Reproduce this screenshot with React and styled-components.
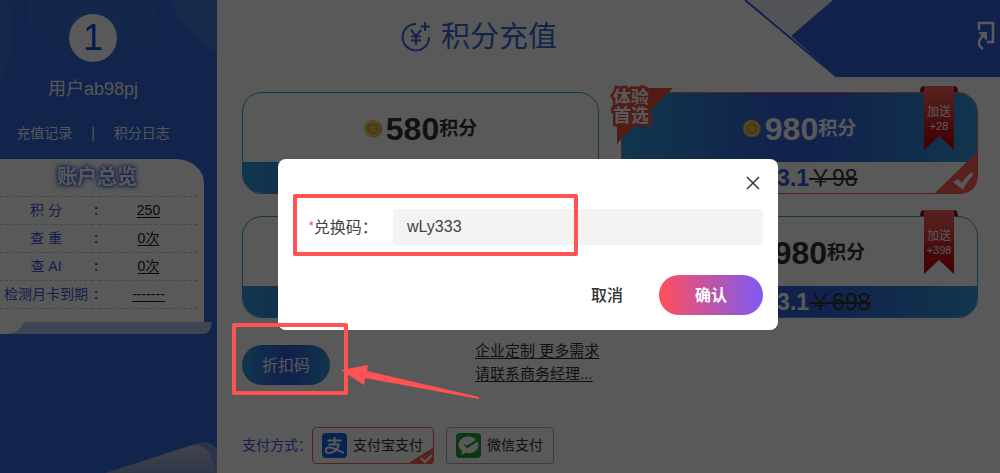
import React from "react";
import styled, { createGlobalStyle, css } from "styled-components";

const Global = createGlobalStyle`
  *, *::before, *::after { box-sizing: border-box; }
  body {
    margin: 0;
    background: #fff;
    font-family: "Liberation Sans", "Noto Sans CJK SC", sans-serif;
    font-size: 14px;
    color: #333;
  }
  button, input { font: inherit; }
`;

const blueGradient = "linear-gradient(90deg, #3399dd 0%, #3360da 46%, #3360da 54%, #3399dd 100%)";
const red = "#ff5e56";

const Page = styled.div`
  display: flex;
  min-height: 100vh;
`;

/* ---------- sidebar ---------- */

const Sidebar = styled.aside`
  position: relative;
  flex: 0 0 217px;
  display: flex;
  flex-direction: column;
  align-items: center;
  padding-top: 14px;
  background: #3367d6;
  overflow: hidden;
  > * { position: relative; }
`;

const SidebarArt = styled.svg`
  && { position: absolute; }
  left: 0;
  ${(p) => (p.$bottom ? "bottom: 0;" : "top: 0;")}
`;

const Avatar = styled.div`
  width: 48px;
  height: 48px;
  border-radius: 50%;
  background: #fff;
  color: #1048e8;
  font-size: 36px;
  line-height: 48px;
  text-align: center;
`;

const UserName = styled.div`
  margin-top: 14px;
  color: #f0f3fa;
  font-size: 18px;
  line-height: 26px;
`;

const QuickLinks = styled.nav`
  display: flex;
  justify-content: center;
  align-self: flex-start;
  gap: 19px;
  width: 186px;
  margin-top: 21px;
  color: #f0f3fa;
  line-height: 20px;
  a { color: inherit; text-decoration: none; }
`;

const Identity = styled.div`
  display: flex;
  flex-direction: column;
  align-items: center;
  align-self: flex-start;
  width: 186px;
`;

const Overview = styled.section`
  align-self: flex-start;
  width: 204px;
  height: 163px;
  margin-top: 16px;
  padding-right: 7px;
  background: #fff;
  border-top-right-radius: 28px 24px;
`;

const OverviewTitle = styled.h2`
  margin: 0;
  height: 37px;
  padding-right: 3px;
  color: #fff;
  font-size: 20px;
  line-height: 37px;
  text-align: center;
  text-shadow: 0 0 3px #3360da, 0 0 4px #3360da, 0 0 6px #3360da;
`;

const StatTable = styled.table`
  width: 100%;
  border-collapse: collapse;
  table-layout: fixed;
  tr { height: 28px; border-top: 1px dashed #ccc; }
  tbody tr:last-child { border-bottom: 1px dashed #ccc; }
  th, td { padding: 0 0 2px; font-weight: 400; text-align: center; line-height: 20px; white-space: nowrap; }
  th { color: #3d58dc; }
  td:nth-child(2) { color: #3d58dc; font-weight: 700; }
  a { color: #222; text-underline-offset: 2px; }
`;

const Curl = styled.svg`
  display: block;
  align-self: flex-start;
`;

/* ---------- main column ---------- */

const Main = styled.main`
  flex: 1;
  min-width: 0;
  display: flex;
  flex-direction: column;
`;

const TopBar = styled.header`
  position: relative;
  display: flex;
  align-items: center;
  gap: 10px;
  height: 77px;
  padding: 0 0 3px 184px;
  color: #3367d6;
`;

const Title = styled.h1`
  margin: 0;
  font-size: 29px;
  font-weight: 400;
  line-height: 40px;
`;

const Corner = styled.svg`
  position: absolute;
  top: 0;
  right: 0;
`;

const Plans = styled.div`
  display: grid;
  grid-template-columns: 1fr 1fr;
  gap: 22px;
  padding: 15px 22px 0 25px;
`;

const PlanCard = styled.article`
  position: relative;
  display: flex;
  flex-direction: column;
  height: 102px;
  border: 1px solid ${(p) => (p.$selected ? red : "#3399dd")};
  border-radius: 20px;
`;

const band = css`
  background: ${blueGradient};
  color: #fff;
`;

const Points = styled.div`
  flex: 1;
  display: flex;
  align-items: center;
  justify-content: center;
  padding-top: 2px;
  border-radius: 19px 19px 0 0;
  color: #333;
  ${(p) => p.$filled && band}
  svg { margin-right: 4px; }
`;

const Amount = styled.strong`
  font-size: 32px;
  line-height: 36px;
`;

const Unit = styled.strong`
  font-size: 19px;
  line-height: 28px;
`;

const Price = styled.div`
  display: flex;
  align-items: center;
  justify-content: center;
  height: 31px;
  border-radius: 0 0 19px 19px;
  color: #3360da;
  font-size: 23px;
  line-height: 30px;
  ${(p) => p.$filled && band}
  s { color: #333; }
`;

const Ribbon = styled.div`
  position: absolute;
  top: -7px;
  right: 19px;
  width: 38px;
  height: 65px;
  padding-top: 19px;
  color: #fff;
  font-size: 12px;
  line-height: 14px;
  text-align: center;
  svg { position: absolute; inset: 0; }
  span { position: relative; display: block; }
  span + span { font-size: 11px; }
`;

const PickBadge = styled.div`
  position: absolute;
  top: -7px;
  left: -11px;
  padding: 3px 2px;
  color: #fff;
  font-size: 18px;
  font-weight: 700;
  line-height: 18px;
  -webkit-text-stroke: 5px #e8503f;
  paint-order: stroke fill;
  svg { position: absolute; left: 0; top: 0; }
  span { position: relative; display: block; }
`;

const CornerTick = styled.svg`
  position: absolute;
  right: -1px;
  bottom: -1px;
`;

const Offers = styled.div`
  display: flex;
  align-items: flex-start;
  padding: 21px 25px 0;
`;

const DiscountButton = styled.button`
  width: 88px;
  height: 40px;
  margin-top: 6px;
  padding: 0 0 3px;
  border: 0;
  border-radius: 20px;
  background: ${blueGradient};
  color: #fff;
  font-size: 16px;
`;

const ContactLink = styled.a`
  margin-left: 145px;
  color: #333;
  font-size: 15px;
  line-height: 23px;
  text-underline-offset: 2px;
  span { display: block; text-decoration: underline; }
`;

const Payment = styled.fieldset`
  display: flex;
  align-items: center;
  gap: 12px;
  margin: 42px 0 0;
  padding: 0 25px;
  border: 0;
`;

const PayLabel = styled.span`
  width: 58px;
  padding-bottom: 3px;
  color: #3d58dc;
  white-space: nowrap;
`;

const PayOption = styled.label`
  position: relative;
  display: flex;
  align-items: center;
  gap: 6px;
  height: 37px;
  padding: 0 10px 0 9px;
  border: 1px solid ${(p) => (p.$selected ? red : "#aaa")};
  border-radius: 4px;
  input { position: absolute; opacity: 0; margin: 0; }
  span { padding-bottom: 3px; }
`;

/* ---------- dialog ---------- */

const Overlay = styled.div`
  position: fixed;
  inset: 0;
  z-index: 10;
  display: flex;
  justify-content: center;
  align-items: center;
  padding: 16px 0 0 56px;
  background: rgba(0, 0, 0, 0.65);
`;

const Dialog = styled.form`
  display: flex;
  flex-direction: column;
  width: 500px;
  padding: 12px 15px 15px 31px;
  border-radius: 8px;
  background: #fff;
`;

const CloseButton = styled.button`
  display: grid;
  place-items: center;
  align-self: flex-end;
  width: 24px;
  height: 24px;
  margin-right: -2px;
  padding: 0;
  border: 0;
  background: none;
`;

const Field = styled.div`
  display: flex;
  align-items: center;
  margin-top: 14px;
  font-size: 16px;
  label { width: 84px; padding-bottom: 3px; color: #444; white-space: nowrap; }
  i { color: #f33; font-style: normal; font-size: 12px; vertical-align: 3px; }
  input {
    flex: 1;
    min-width: 0;
    height: 36px;
    padding: 0 14px;
    border: 0;
    border-radius: 4px;
    outline: 0;
    background: #f3f3f3;
    color: #444;
  }
`;

const Actions = styled.div`
  display: flex;
  justify-content: flex-end;
  margin-top: 30px;
`;

const ActionButton = styled.button`
  width: 104px;
  height: 40px;
  padding: 0 0 3px;
  border: 0;
  border-radius: 20px;
  background: ${(p) => (p.$primary ? "linear-gradient(90deg, #ff4f5b, #7d5af5)" : "none")};
  color: ${(p) => (p.$primary ? "#fff" : "#333")};
  font-size: 16px;
  font-weight: ${(p) => (p.$primary ? 700 : 500)};
`;

/* ---------- tutorial marks ---------- */

const Marks = styled.div`
  position: fixed;
  inset: 0;
  z-index: 20;
  pointer-events: none;
  svg { position: absolute; left: 340px; top: 364px; }
`;

const MarkBox = styled.div`
  position: absolute;
  left: ${(p) => p.$x}px;
  top: ${(p) => p.$y}px;
  width: ${(p) => p.$w}px;
  height: ${(p) => p.$h}px;
  border: 4px solid #ff5252;
  border-radius: 2px;
`;

function Coin() {
  return (
    <svg width="18" height="19" viewBox="0 0 18 19" aria-hidden="true">
      <ellipse cx="9.500" cy="10" rx="8.500" ry="8.500" fill="#b9983a" />
      <ellipse cx="8.500" cy="9.500" rx="8.500" ry="8.500" fill="#edcf58" />
      <circle cx="9" cy="9.500" r="5.800" fill="#d8a03e" />
      <path d="M9 5l1.500 2.600 3 .7-2 2.300.2 3L9 12.400l-2.800 1.200.3-3-2-2.300 3-.7z" fill="#edc450" />
    </svg>
  );
}

function GiftRibbon({ amount }) {
  return (
    <Ribbon>
      <svg width="38" height="65" viewBox="0 0 38 65" aria-hidden="true">
        <defs>
          <linearGradient id="ribbon" x1="0" y1="0" x2="0" y2="1">
            <stop offset="0" stopColor="#f8605a" />
            <stop offset="0.3" stopColor="#e64a44" />
            <stop offset="0.65" stopColor="#c81c1e" />
            <stop offset="1" stopColor="#c00408" />
          </linearGradient>
        </defs>
        <path d="M0 6Q0 0 4 0H34Q38 0 38 6Z" fill="#980f12" />
        <path d="M4 0H34V64L19 50L4 64Z" fill="url(#ribbon)" />
      </svg>
      <span>加送</span>
      <span>{amount}</span>
    </Ribbon>
  );
}

function Tick({ size = "large" }) {
  return size === "large" ? (
    <CornerTick width="44" height="43" viewBox="0 0 44 43" aria-hidden="true">
      <path d="M44 0V23Q44 43 24 43H0Z" fill={red} />
      <path d="M19 31l5-3 4 4q4-7 10-11l1 3q-6 6-10 15z" fill="#fff" />
    </CornerTick>
  ) : (
    <CornerTick width="27" height="17" viewBox="0 0 27 17" aria-hidden="true">
      <path d="M27 0V13Q27 17 23 17H0Z" fill={red} />
      <path d="M14 11l4 4 7-7" fill="none" stroke="#fff" strokeWidth="2" />
    </CornerTick>
  );
}

const plans = [
  { amount: "580", price: "￥43.1", old: "￥58" },
  { amount: "980", price: "￥63.1", old: "￥98", gift: "+28", selected: true },
  { amount: "2980", price: "￥263.1", old: "￥298" },
  { amount: "6980", price: "￥463.1", old: "￥698", gift: "+398" },
];

function Plan({ amount, price, old, gift, selected }) {
  return (
    <PlanCard $selected={selected}>
      <Points $filled={selected}>
        <Coin />
        <Amount>{amount}</Amount>
        <Unit>积分</Unit>
      </Points>
      <Price $filled={!selected}>
        <strong>{price}</strong>
        <s>{old}</s>
      </Price>
      {selected && (
        <PickBadge>
          <svg width="62" height="58" viewBox="0 0 62 58" aria-hidden="true">
            <path d="M4 2H62L56 8 11 52 6 58V40Z" fill="#e8503f" />
          </svg>
          <span>体验</span>
          <span>首选</span>
        </PickBadge>
      )}
      {gift && <GiftRibbon amount={gift} />}
      {selected && <Tick />}
    </PlanCard>
  );
}

const stats = [
  ["积 分", "250"],
  ["查 重", "0次"],
  ["查 AI", "0次"],
  ["检测月卡到期", "-------"],
];

export default function App() {
  return (
    <>
      <Global />
      <Page>
        <Sidebar>
          <SidebarArt width="217" height="90" viewBox="0 0 217 90" aria-hidden="true">
            <path d="M170 0Q184 36 217 52V0Z" fill="#fff" opacity="0.1" />
            <path d="M27 0C22 28 40 42 68 43C105 44 135 42 165 36L150 0Z" fill="#fff" opacity="0.05" />
            <path d="M0 0H5Q25 40 0 80Z" fill="#fff" opacity="0.06" />
          </SidebarArt>
          <SidebarArt $bottom width="217" height="32" viewBox="0 0 217 32" aria-hidden="true">
            <defs>
              <linearGradient id="sheet" x1="0" y1="0" x2="0" y2="1">
                <stop offset="0" stopColor="#b9c3dc" />
                <stop offset="1" stopColor="#8f9dcc" />
              </linearGradient>
            </defs>
            <path d="M105 32L194 3Q210 -2 217 8V32Z" fill="#7f96d2" />
            <path d="M107 32L194 4Q212 4 215 32Z" fill="url(#sheet)" />
          </SidebarArt>
          <Identity>
            <Avatar>1</Avatar>
            <UserName>用户ab98pj</UserName>
          </Identity>
          <QuickLinks>
            <a href="#records">充值记录</a>
            <span>|</span>
            <a href="#log">积分日志</a>
          </QuickLinks>
          <Overview>
            <OverviewTitle>账户总览</OverviewTitle>
            <StatTable>
              <colgroup>
                <col width="92" />
                <col width="8" />
                <col width="97" />
              </colgroup>
              <tbody>
                {stats.map(([name, value]) => (
                  <tr key={name}>
                    <th scope="row">{name}</th>
                    <td>:</td>
                    <td><a href="#detail">{value}</a></td>
                  </tr>
                ))}
              </tbody>
            </StatTable>
          </Overview>
          <Curl width="212" height="12" viewBox="0 0 212 12" aria-hidden="true">
            <path d="M0 0H212Q211 12 203 12H0Z" fill="#b7c6f5" />
            <path d="M0 0H24Q20 11 7 12H0Z" fill="#fff" />
          </Curl>
        </Sidebar>

        <Main>
          <TopBar>
            <svg width="30" height="30" viewBox="0 0 30 30" fill="none" stroke="#3367d6" strokeWidth="2" aria-hidden="true">
              <path d="M15 2A13.200 13.200 0 1 0 28 15" />
              <path d="M24 0V9M19.500 4.500H29" />
              <path d="M10 8l5 6 5-6M15 14v9M10 14.500H20M10 18.500H20" />
            </svg>
            <Title>积分充值</Title>
            <Corner width="256" height="77" viewBox="0 0 256 77" aria-hidden="true">
              <path d="M3 0H89L47 36Z" fill="#e9edf5" />
              <path d="M89 0H256V77H93L47 36Z" fill="#3360d6" />
              <path d="M1 0L93 77" stroke="#3360d6" strokeWidth="2" />
              <g fill="none" stroke="#fff" strokeWidth="2.500">
                <path d="M235 30V23H249V42H243" />
                <path d="M239 49Q230 43 241 34" />
              </g>
              <path d="M234 32H243V41Z" fill="#fff" />
            </Corner>
          </TopBar>

          <Plans>
            {plans.map((plan) => (
              <Plan key={plan.amount} {...plan} />
            ))}
          </Plans>

          <Offers>
            <DiscountButton type="button">折扣码</DiscountButton>
            <ContactLink href="#contact">
              <span>企业定制 更多需求</span>
              <span>请联系商务经理...</span>
            </ContactLink>
          </Offers>

          <Payment>
            <PayLabel>支付方式：</PayLabel>
            <PayOption $selected>
              <input type="radio" name="pay" defaultChecked />
              <svg width="25" height="25" viewBox="0 0 25 25" aria-hidden="true">
                <rect width="25" height="25" rx="4" fill="#1668e8" />
                <g fill="none" stroke="#fff" strokeWidth="2">
                  <path d="M5.500 7.500H19.500M12.500 4V11.500M6.500 11.500H17.500" />
                  <path d="M17 11.500Q14 20 7 20C2 20 3 14 8 14.500C13 15 16 18 22 20" />
                </g>
              </svg>
              <span>支付宝支付</span>
              <Tick size="small" />
            </PayOption>
            <PayOption>
              <input type="radio" name="pay" />
              <svg width="25" height="25" viewBox="0 0 25 25" aria-hidden="true">
                <rect width="25" height="25" rx="4" fill="#22a035" />
                <path d="M12.500 3.500C7 3.500 2.500 7 2.500 12C2.500 14.500 4 16.500 6 18L5.500 22L9.500 19.800C17 21.500 22.500 17 22.500 12C22.500 10.500 22 9.500 21.500 8.500L11 15.500L7.500 10.500L11 12.500L20 7C18.500 5 16 3.500 12.500 3.500Z" fill="#fff" />
              </svg>
              <span>微信支付</span>
            </PayOption>
          </Payment>
        </Main>
      </Page>

      <Overlay>
        <Dialog role="dialog" aria-modal="true" onSubmit={(e) => e.preventDefault()}>
          <CloseButton type="button" aria-label="关闭">
            <svg width="14" height="14" viewBox="0 0 14 14" stroke="#333" strokeWidth="1.500" aria-hidden="true">
              <path d="M1 1L13 13M13 1L1 13" />
            </svg>
          </CloseButton>
          <Field>
            <label htmlFor="code"><i>*</i>兑换码：</label>
            <input id="code" type="text" defaultValue="wLy333" />
          </Field>
          <Actions>
            <ActionButton type="button">取消</ActionButton>
            <ActionButton type="submit" $primary>确认</ActionButton>
          </Actions>
        </Dialog>
      </Overlay>

      <Marks aria-hidden="true">
        <MarkBox $x={293} $y={194} $w={285} $h={62} />
        <MarkBox $x={232} $y={323} $w={116} $h={72} />
        <svg width="140" height="36" viewBox="0 0 140 36">
          <path d="M1 6L28 1L27 7L139 33V35L25 14L24 21Z" fill="#ff5252" />
        </svg>
      </Marks>
    </>
  );
}
